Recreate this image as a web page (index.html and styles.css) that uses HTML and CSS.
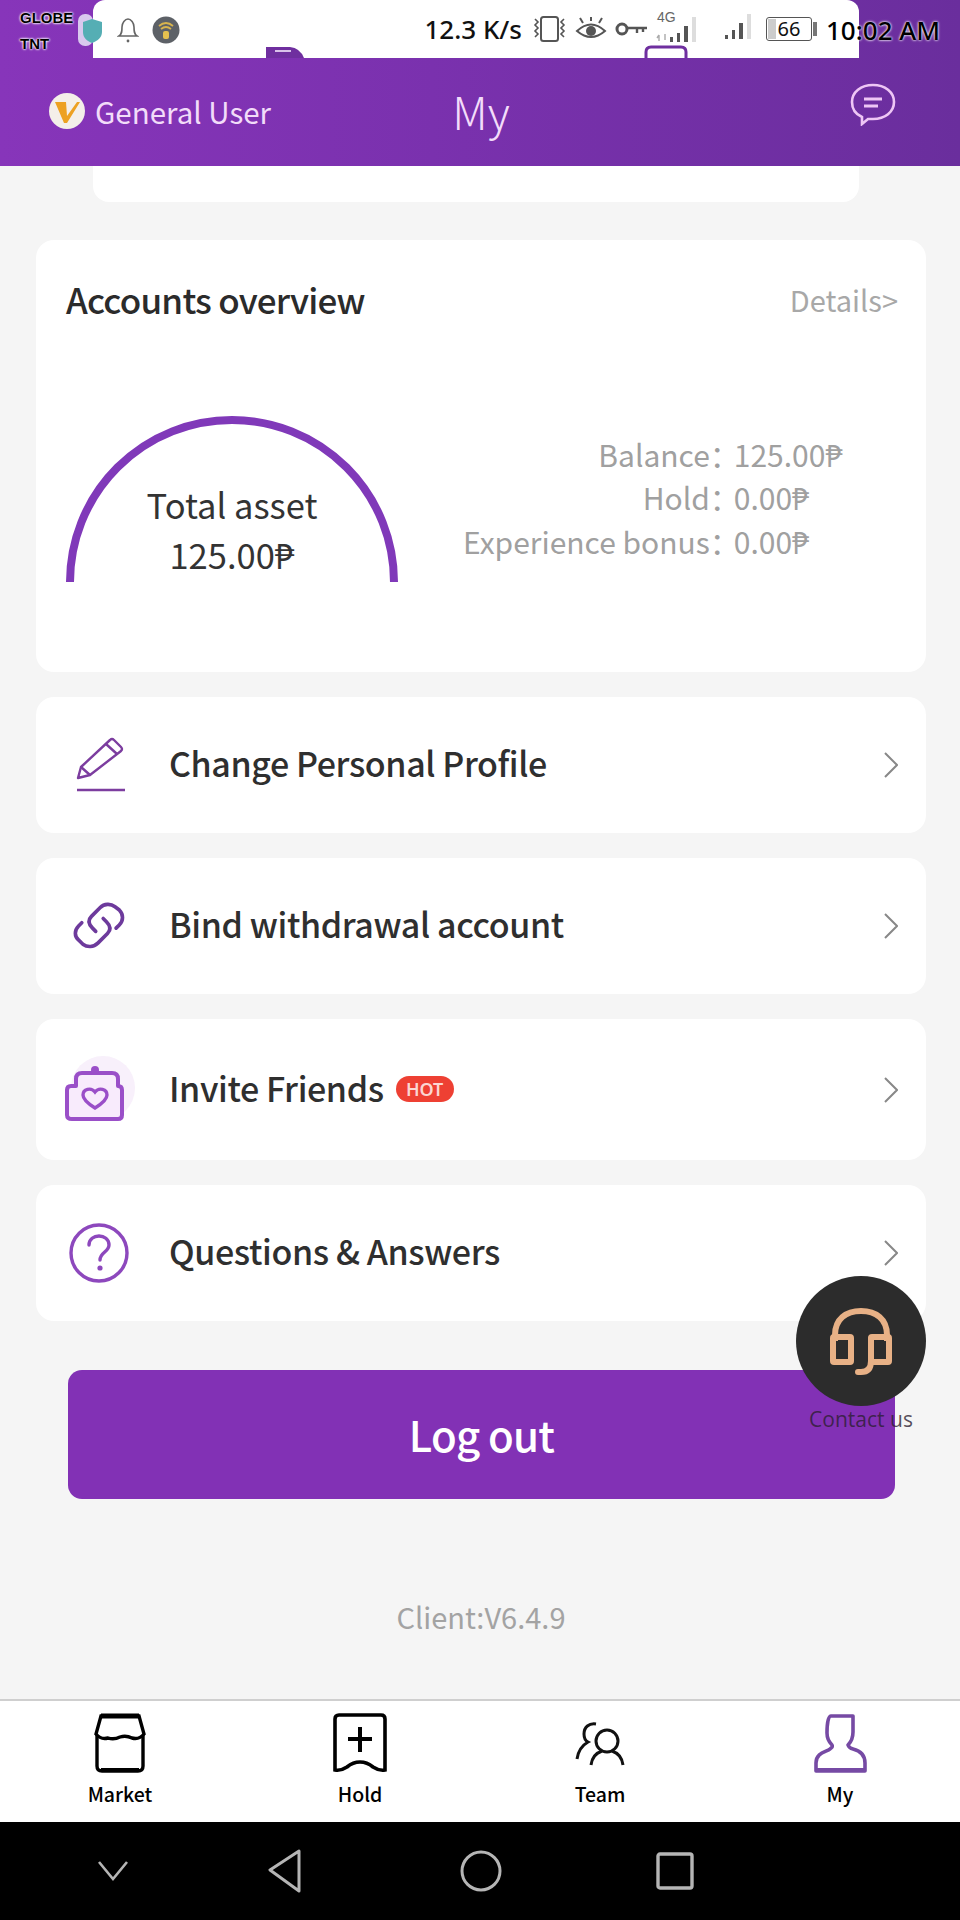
FILE: index.html
```html
<!DOCTYPE html>
<html lang="en">
<head>
  <meta charset="UTF-8">
  <title>My</title>
  <link rel="stylesheet" href="styles.css">
</head>
<body>
<div class="phone">

  <header class="header">
    <div class="status">
      <div class="carrier"><span>GLOBE</span><span>TNT</span></div>
      <svg class="shield" width="30" height="36" viewBox="0 0 30 36">
        <rect x="0" y="2" width="15" height="32" rx="7" fill="#d9c8ee"/>
        <path d="M14 7l10 3v10c0 6-5 9-10 11-5-2-9-5-9-11V10z" fill="#55aeb4"/>
      </svg>
      <div class="status-panel">
        <svg class="peek peek-a" width="44" height="14" viewBox="0 0 44 14">
          <path d="M3 14V3h24q10 1 14 11z" fill="#6f2f9f"/>
          <rect x="12" y="6" width="16" height="2" fill="#d9c3ea"/>
        </svg>
        <svg class="peek peek-b" width="44" height="13" viewBox="0 0 44 13">
          <path d="M2 13V7q0-5 5-5h30q5 0 5 5v6" fill="none" stroke="#6f2f9f" stroke-width="3"/>
        </svg>
        <div class="status-left">
          <svg width="22" height="26" viewBox="0 0 22 26" fill="none" stroke="#666" stroke-width="1.6">
            <path d="M2 19c3-2 3-5 3-9 0-4 3-8 6-8s6 4 6 8c0 4 0 7 3 9z"/>
            <circle cx="11" cy="24" r="1.4" fill="#666" stroke="none"/>
          </svg>
          <svg width="28" height="28" viewBox="0 0 28 28">
            <circle cx="14" cy="14" r="13.5" fill="#5d6167"/>
            <path d="M7 10q7-6 14 0M9 13q5-4 10 0" fill="none" stroke="#d8b44e" stroke-width="1.8"/>
            <rect x="11" y="15" width="6" height="8" rx="2" fill="#e5c04f"/>
          </svg>
        </div>
        <div class="status-right">
          <span class="speed">12.3 K/s</span>
          <svg class="si-eye" width="36" height="28" viewBox="0 0 36 28" fill="none" stroke="#555" stroke-width="2">
            <rect x="9" y="2" width="17" height="24" rx="2.5"/>
            <path d="M3 4l3 3-3 3 3 3-3 3 3 3-3 3M32 4l-3 3 3 3-3 3 3 3-3 3 3 3" stroke-width="1.6"/>
          </svg>
          <svg class="si-eye" width="32" height="28" viewBox="0 0 32 28" fill="none" stroke="#555" stroke-width="2">
            <path d="M2 16q14-13 28 0q-14 12-28 0z"/>
            <circle cx="16" cy="16" r="5" fill="#555" stroke="none"/>
            <path d="M16 6V2M8 8L5 3M24 8l3-5"/>
          </svg>
          <svg class="si-key" width="33" height="16" viewBox="0 0 33 16" fill="none" stroke="#555">
            <circle cx="7" cy="8" r="5" stroke-width="3"/>
            <path d="M12 7h20M22 7v5M28 7v4" stroke-width="2.4"/>
          </svg>
          <div class="net">
            <span class="net-label">4G</span>
            <svg width="44" height="28" viewBox="0 0 44 28">
              <rect x="14" y="21" width="3" height="5" fill="#555"/>
              <rect x="21" y="17" width="3" height="9" fill="#555"/>
              <rect x="28" y="10" width="4" height="16" fill="#555"/>
              <rect x="36" y="1" width="4" height="25" fill="#ddd"/>
              <path d="M3 25v-6M3 19l-2 3M9 18v6" stroke="#aaa" stroke-width="1.4" fill="none"/>
            </svg>
          </div>
          <svg class="bars" width="30" height="28" viewBox="0 0 30 28">
            <rect x="1" y="22" width="3" height="4" fill="#555"/>
            <rect x="8" y="17" width="3" height="9" fill="#555"/>
            <rect x="15" y="10" width="4" height="16" fill="#555"/>
            <rect x="23" y="1" width="4" height="25" fill="#ddd"/>
          </svg>
          <div class="battery"><span class="battery-fill"></span><span>66</span></div>
          <span class="battery-tip"></span>
        </div>
      </div>
      <span class="clock">10:02 AM</span>
    </div>
    <div class="nav">
      <div class="user">
        <span class="vip"><svg width="30" height="28" viewBox="0 0 30 28"><path d="M3 5h11l1 14L25 5h3L15 26h-3z" fill="#eda122"/></svg></span>
        <span>General User</span>
      </div>
      <div class="nav-title">My</div>
      <svg class="msg" width="46" height="44" viewBox="0 0 46 44" fill="none" stroke="#eec6f5" stroke-width="2.6">
        <path d="M12 35C5 32 2 26 2 20 2 10 11 3 23 3s21 7 21 17-9 17-21 17c-2 0-3 0-5 0l-6 5z"/>
        <path d="M14 17h18M14 24h14" stroke-width="3"/>
      </svg>
    </div>
  </header>

  <div class="under-panel"></div>

  <main class="main">
    <section class="card overview">
      <div class="overview-head">
        <h2>Accounts overview</h2>
        <span class="details">Details&gt;</span>
      </div>
      <div class="overview-body">
        <div class="gauge">
          <svg width="332" height="166" viewBox="0 0 332 166">
            <path d="M4 166A162 162 0 0 1 328 166" fill="none" stroke="#8039b9" stroke-width="8"/>
          </svg>
          <div class="gauge-text">
            <div>Total asset</div>
            <div>125.00₱</div>
          </div>
        </div>
        <dl class="amounts">
          <dt>Balance：</dt><dd>125.00₱</dd>
          <dt>Hold：</dt><dd>0.00₱</dd>
          <dt>Experience bonus：</dt><dd>0.00₱</dd>
        </dl>
      </div>
    </section>

    <a class="card row">
      <svg class="row-icon" width="56" height="56" viewBox="0 0 56 56" fill="none" stroke="#7c3d9f" stroke-width="2.4">
        <path d="M7 41l3-11L39 3q2-2 4 0l7 7q2 2 0 4L19 38z" stroke-linejoin="round"/>
        <path d="M10 30l9 8M35 7l11 10"/>
        <path d="M6 53h48"/>
      </svg>
      <span>Change Personal Profile</span>
      <svg class="chev" width="14" height="26" viewBox="0 0 14 26"><path d="M1 1l12 12L1 25" fill="none" stroke="#888" stroke-width="2"/></svg>
    </a>
    <a class="card row">
      <svg class="row-icon link-icon" width="60" height="56" viewBox="0 0 56 52" fill="none" stroke="#6d3a9c" stroke-width="3.4" stroke-linecap="round">
        <path d="M24 31l-3-3c-4-4-4-8-1-11l8-8c4-4 10-4 14-1l4 3c4 4 4 10 0 14l-3 3"/>
        <path d="M31 19l3 3c4 4 4 8 1 11l-9 9c-4 4-10 4-14 1l-4-4c-4-3-4-9 0-13l3-3"/>
      </svg>
      <span>Bind withdrawal account</span>
      <svg class="chev" width="14" height="26" viewBox="0 0 14 26"><path d="M1 1l12 12L1 25" fill="none" stroke="#888" stroke-width="2"/></svg>
    </a>
    <a class="card row row-invite">
      <svg class="row-icon invite-icon" width="72" height="72" viewBox="0 0 72 72" fill="none" stroke="#9a4fc8" stroke-width="4">
        <circle cx="40" cy="32" r="32" fill="#f8f0fb" stroke="none"/>
        <path d="M13 23q0-6 6-6h30q6 0 6 6v7q4 0 4 4v25q0 4-4 4H9q-5 0-5-4V34q0-4 4-4h5z" fill="#f8ebfc" stroke-linejoin="round"/>
        <circle cx="32" cy="14" r="4" fill="#9a4fc8" stroke="none"/>
        <path d="M32 52c-8-5-12-9-12-13 0-6 8-8 12-3 4-5 12-3 12 3 0 4-4 8-12 13z" stroke-width="3.4"/>
      </svg>
      <span>Invite Friends</span>
      <em class="hot">HOT</em>
      <svg class="chev" width="14" height="26" viewBox="0 0 14 26"><path d="M1 1l12 12L1 25" fill="none" stroke="#888" stroke-width="2"/></svg>
    </a>
    <a class="card row">
      <svg class="row-icon help-icon" width="60" height="60" viewBox="0 0 60 60" fill="none" stroke="#8d48bd" stroke-width="3.4">
        <circle cx="30" cy="30" r="28"/>
        <path d="M20 22c0-6 5-9 10-9s10 3 10 9c0 7-9 7-9 15" stroke-linecap="round"/>
        <circle cx="31" cy="45" r="2.6" fill="#8d48bd" stroke="none"/>
      </svg>
      <span>Questions &amp; Answers</span>
      <svg class="chev" width="14" height="26" viewBox="0 0 14 26"><path d="M1 1l12 12L1 25" fill="none" stroke="#888" stroke-width="2"/></svg>
    </a>

    <button class="logout">Log out</button>
    <p class="client">Client:V6.4.9</p>

    <div class="contact">
      <span class="contact-btn">
        <svg width="64" height="68" viewBox="0 0 64 68" fill="none" stroke="#e8b186" stroke-width="6">
          <path d="M6 34V28C6 12 17 4 32 4s26 8 26 24v6"/>
          <rect x="4" y="30" width="18" height="25" rx="1"/>
          <rect x="42" y="30" width="18" height="25" rx="1"/>
          <path d="M42 32v22q0 11-10 11h-3" stroke-linecap="round"/>
        </svg>
      </span>
      <span class="contact-label">Contact us</span>
    </div>
  </main>

  <nav class="tabs">
    <a class="tab">
      <svg width="56" height="60" viewBox="0 0 56 60" fill="none" stroke="#000" stroke-width="3.4">
        <path d="M5 22V53q0 5 5 5h36q5 0 5-5V22"/>
        <path d="M9 3h38l5 18q-5 6-12 4-6-3-12-1-6 3-12 1-7 2-12-4z" fill="#fff"/>
        <path d="M9 3h38" stroke-width="5"/>
        <path d="M9 57h38" stroke-width="4"/>
      </svg>
      <span>Market</span>
    </a>
    <a class="tab">
      <svg width="56" height="60" viewBox="0 0 56 60" fill="none" stroke="#000" stroke-width="3.6">
        <path d="M3 6q0-4 4-4h42q4 0 4 4v51q-6 1-12-3-6-5-13-5-7 0-13 5-6 4-12 3z"/>
        <path d="M16 26h24M28 14v25" stroke-width="4"/>
      </svg>
      <span>Hold</span>
    </a>
    <a class="tab">
      <svg width="56" height="60" viewBox="0 0 56 60" fill="none" stroke="#111" stroke-width="3">
        <circle cx="35" cy="28" r="11"/>
        <path d="M19 52c1-8 5-12 11-14M51 52c-1-8-5-12-11-14"/>
        <path d="M24 11c-7-1-12 3-12 10 0 4 2 7 4 8-7 4-10 10-11 17"/>
      </svg>
      <span>Team</span>
    </a>
    <a class="tab">
      <svg width="56" height="60" viewBox="0 0 56 60" fill="none" stroke="#764aa4" stroke-width="3.6">
        <path d="M19 3h22v16q0 8-5 13 1 3 5 4 12 3 12 14v8H4v-8c0-11 11-11 14-14 2-2 3-2 2-4-4-4-5-8-5-12 0-8 1-17 4-17z" stroke-linejoin="round"/>
        <path d="M5 57h47" stroke-width="4"/>
      </svg>
      <span>My</span>
    </a>
  </nav>

  <div class="sys-nav">
    <svg width="32" height="22" viewBox="0 0 32 22" fill="none" stroke="#b5b5b5" stroke-width="2.6"><path d="M2 2l14 17L30 2"/></svg>
    <svg width="36" height="44" viewBox="0 0 36 44" fill="none" stroke="#b5b5b5" stroke-width="3"><path d="M32 2v40L3 21z" stroke-linejoin="round"/></svg>
    <svg width="42" height="42" viewBox="0 0 42 42" fill="none" stroke="#b5b5b5" stroke-width="3"><circle cx="21" cy="21" r="19"/></svg>
    <svg width="38" height="38" viewBox="0 0 38 38" fill="none" stroke="#b5b5b5" stroke-width="3.4"><rect x="2" y="2" width="34" height="34" rx="2"/></svg>
  </div>

</div>
</body>
</html>
```

FILE: styles.css
```css
* {
  box-sizing: border-box;
}
body {
  margin: 0;
  background: #f5f5f5;
  font-family: "Noto Sans CJK SC", "Noto Sans", sans-serif;
}
.phone {
  width: 960px;
  height: 1920px;
  display: flex;
  flex-direction: column;
  overflow: hidden;
}

/* header */
.header {
  height: 166px;
  flex: none;
  background: linear-gradient(90deg, #8735ba 0%, #7a31ae 45%, #6a2e9d 100%);
}
.status {
  height: 58px;
  display: flex;
  position: relative;
}
.carrier {
  width: 93px;
  padding: 7px 0 0 20px;
  display: flex;
  flex-direction: column;
  gap: 5px;
  font: bold 15px/21px "Liberation Sans", sans-serif;
  color: #000;
  text-shadow: 0 0 2px #fff, 0 0 2px #fff, 0 0 3px #fff;
}
.shield {
  position: absolute;
  left: 78px;
  top: 12px;
  z-index: 1;
}
.status-panel {
  flex: none;
  width: 766px;
  height: 58px;
  background: #fff;
  border-radius: 12px 12px 0 0;
  display: flex;
  align-items: center;
  justify-content: space-between;
  padding: 0 42px 0 24px;
  position: relative;
}
.peek {
  position: absolute;
  bottom: 0;
}
.peek-a {
  left: 170px;
}
.peek-b {
  left: 551px;
}
.status-left {
  display: flex;
  align-items: center;
  gap: 13px;
  margin-top: 1px;
}
.status-right {
  display: flex;
  align-items: center;
}
.speed {
  font: 500 26px/30px "Noto Sans", sans-serif;
  color: #111;
  margin-right: 10px;
  white-space: nowrap;
}
.si-eye {
  margin-right: 7px;
}
.si-key {
  margin: 0 8px 0 1px;
}
.net {
  position: relative;
  width: 44px;
  height: 34px;
}
.net svg {
  position: absolute;
  left: 0;
  bottom: 2px;
}
.net-label {
  position: absolute;
  left: 1px;
  top: -3px;
  font: 14px/16px "Liberation Sans Narrow", "Liberation Sans", sans-serif;
  color: #666;
}
.bars {
  margin-left: 24px;
  margin-top: -4px;
}
.battery {
  width: 46px;
  height: 24px;
  margin-left: 12px;
  border: 1.5px solid #555;
  border-radius: 3px;
  display: flex;
  align-items: center;
  justify-content: center;
  font: 20px/22px "Noto Sans", sans-serif;
  color: #111;
  position: relative;
}
.battery-fill {
  position: absolute;
  left: 1px;
  top: 1px;
  bottom: 1px;
  width: 8px;
  background: #ccc;
}
.battery-tip {
  width: 4px;
  height: 14px;
  background: #777;
  margin-left: 1px;
}
.clock {
  flex: 1;
  padding: 16px 0 0 0;
  margin-left: -33px;
  position: relative;
  white-space: nowrap;
  font: 500 26px/28px "Noto Sans", sans-serif;
  color: #000;
  text-shadow: 0 0 2px #fff, 0 0 3px #fff;
}
.nav {
  height: 108px;
  display: grid;
  grid-template-columns: 1fr auto 1fr;
  align-items: center;
}
.user {
  display: flex;
  align-items: center;
  gap: 10px;
  padding: 0 0 2px 49px;
  font-size: 29.5px;
  color: #f2dcf9;
}
.vip {
  width: 36px;
  height: 36px;
  border-radius: 50%;
  background: #f4efe9;
  display: flex;
  align-items: center;
  justify-content: center;
}
.nav-title {
  font-size: 45px;
  font-weight: 300;
  color: #f3dcfa;
  line-height: 50px;
  margin: 0 0 2px 2px;
}
.msg {
  justify-self: end;
  margin: -16px 64px 0 0;
}

.under-panel {
  height: 36px;
  flex: none;
  margin: 0 101px 0 93px;
  background: #fff;
  border-radius: 0 0 16px 16px;
}

.main {
  flex: 1;
  position: relative;
  padding: 38px 34px 0 36px;
  display: flex;
  flex-direction: column;
  gap: 25px;
}
.card {
  background: #fff;
  border-radius: 18px;
}

/* overview */
.overview {
  height: 432px;
  padding: 32px 28px 0 30px;
}
.overview-head {
  display: flex;
  align-items: center;
  justify-content: space-between;
  height: 52px;
}
.overview-head h2 {
  margin: 0;
  font-size: 35px;
  font-weight: 500;
  letter-spacing: -0.8px;
  color: #2b2b2b;
}
.details {
  margin-top: 2px;
  font-size: 29px;
  color: #a8a8a8;
}
.overview-body {
  display: flex;
  align-items: flex-start;
  margin-top: 92px;
}
.gauge {
  width: 332px;
  height: 166px;
  flex: none;
  position: relative;
}
.gauge-text {
  position: absolute;
  left: 0;
  right: 0;
  bottom: 3px;
  text-align: center;
  font-size: 34.5px;
  line-height: 50px;
  color: #333;
}
.amounts {
  margin: 16px 0 0 65px;
  display: grid;
  grid-template-columns: auto auto;
  grid-auto-rows: 43.5px;
  align-items: center;
  font-size: 30px;
  color: #a0a0a0;
}
.amounts dt {
  text-align: right;
}
.amounts dd {
  margin: 0 0 0 -6px;
}

/* rows */
.row {
  height: 136px;
  display: flex;
  align-items: center;
  padding: 0 28px 0 133px;
  position: relative;
  font-size: 34px;
  font-weight: 500;
  letter-spacing: -0.4px;
  color: #2f2f2f;
}
.row > span {
  margin-bottom: 5px;
}
.row-invite {
  height: 141px;
}
.row-icon {
  position: absolute;
  left: 35px;
  top: 50%;
  transform: translateY(-50%);
}
.link-icon {
  left: 34px;
}
.invite-icon {
  left: 27px;
  margin-top: 2px;
}
.help-icon {
  left: 33px;
}
.chev {
  margin-left: auto;
}
.hot {
  margin: 0 0 2px 12px;
  width: 58px;
  height: 26px;
  border-radius: 13px;
  background: #ee4033;
  color: #fbd6d2;
  font: normal 600 18px/26px "Noto Sans", sans-serif;
  text-align: center;
  letter-spacing: 0;
}

/* logout */
.logout {
  width: 827px;
  height: 129px;
  flex: none;
  margin: 24px 0 0 32px;
  padding: 0 0 2px 0;
  border: none;
  border-radius: 14px;
  background: #8231b5;
  color: #fff;
  font-family: inherit;
  font-size: 42px;
  font-weight: 500;
  letter-spacing: -0.8px;
}
.client {
  margin: 72px 0 0 0;
  text-align: center;
  font-size: 29px;
  line-height: 40px;
  color: #a3a3a3;
}

/* floating contact button */
.contact {
  position: absolute;
  left: 796px;
  top: 1074px;
  width: 130px;
  display: flex;
  flex-direction: column;
  align-items: center;
}
.contact-btn {
  width: 130px;
  height: 130px;
  border-radius: 50%;
  background: #2c2c2c;
  display: flex;
  align-items: center;
  justify-content: center;
}
.contact-label {
  font-size: 21px;
  line-height: 26px;
  white-space: nowrap;
  color: rgba(45, 30, 50, 0.8);
  font-family: "Open Sans", sans-serif;
}

/* tabs */
.tabs {
  height: 123px;
  flex: none;
  border-top: 2px solid #cfcfcf;
  background: #fff;
  display: grid;
  grid-template-columns: repeat(4, 1fr);
}
.tab {
  display: flex;
  flex-direction: column;
  align-items: center;
  padding-top: 12px;
  font-size: 19.5px;
  font-weight: 500;
  line-height: 28px;
  color: #000;
}
.tab span {
  margin-top: 7px;
}
.sys-nav {
  height: 98px;
  flex: none;
  background: #000;
  display: flex;
  align-items: center;
  padding-left: 97px;
}
.sys-nav svg:nth-child(1) {
  margin-right: 138px;
}
.sys-nav svg:nth-child(2) {
  margin-right: 157px;
}
.sys-nav svg:nth-child(3) {
  margin-right: 154px;
}
```
